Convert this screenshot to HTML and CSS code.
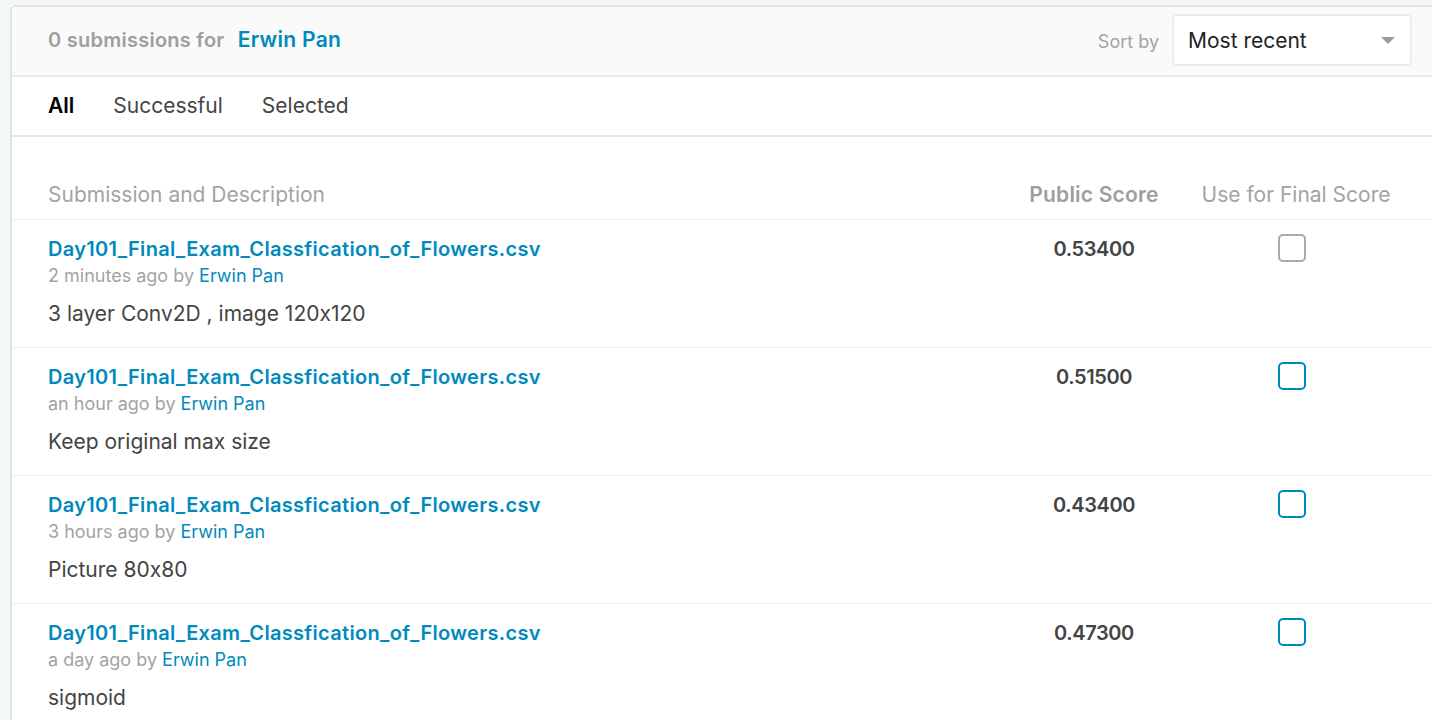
FILE: index.html
```html
<!DOCTYPE html>
<html>
<head>
<meta charset="utf-8">
<link rel="stylesheet" href="styles.css">
</head>
<body>
<div class="card">
  <div class="head">
    <div class="count">0 submissions for <a class="user">Erwin Pan</a></div>
    <div class="sort">
      <span class="sort-label">Sort by</span>
      <div class="select"><span>Most recent</span><span class="caret"></span></div>
    </div>
  </div>
  <div class="tabs">
    <span class="tab active">All</span>
    <span class="tab">Successful</span>
    <span class="tab">Selected</span>
  </div>
  <div class="table">
    <div class="row thead">
      <div class="c-desc">Submission and Description</div>
      <div class="c-score">Public Score</div>
      <div class="c-final">Use for Final Score</div>
    </div>
    <div class="row item">
      <div class="c-desc">
        <a class="file">Day101_Final_Exam_Classfication_of_Flowers.csv</a>
        <div class="meta">2 minutes ago by <a class="by">Erwin Pan</a></div>
        <div class="desc">3 layer Conv2D , image 120x120</div>
      </div>
      <div class="c-score">0.53400</div>
      <div class="c-final"><span class="check off"></span></div>
    </div>
    <div class="row item">
      <div class="c-desc">
        <a class="file">Day101_Final_Exam_Classfication_of_Flowers.csv</a>
        <div class="meta">an hour ago by <a class="by">Erwin Pan</a></div>
        <div class="desc">Keep original max size</div>
      </div>
      <div class="c-score">0.51500</div>
      <div class="c-final"><span class="check"></span></div>
    </div>
    <div class="row item">
      <div class="c-desc">
        <a class="file">Day101_Final_Exam_Classfication_of_Flowers.csv</a>
        <div class="meta">3 hours ago by <a class="by">Erwin Pan</a></div>
        <div class="desc">Picture 80x80</div>
      </div>
      <div class="c-score">0.43400</div>
      <div class="c-final"><span class="check"></span></div>
    </div>
    <div class="row item">
      <div class="c-desc">
        <a class="file">Day101_Final_Exam_Classfication_of_Flowers.csv</a>
        <div class="meta">a day ago by <a class="by">Erwin Pan</a></div>
        <div class="desc">sigmoid</div>
      </div>
      <div class="c-score">0.47300</div>
      <div class="c-final"><span class="check"></span></div>
    </div>
  </div>
</div>
</body>
</html>
```

FILE: styles.css
```css
html, body {
  margin: 0;
  padding: 0;
  background: #f4f7f8;
  overflow: hidden;
  font-family: Inter, Roboto, "Liberation Sans", sans-serif;
  font-feature-settings: "calt" 0;
  color: #3d3d3d;
}
body {
  padding: 5px 0 0 10px;
  width: 1460px;
}
a { text-decoration: none; }
.card {
  width: 1436px;
  background: #fff;
  border: 2px solid #e3e3e3;
  border-radius: 6px;
}
.head {
  height: 68px;
  background: #fafafa;
  border-bottom: 2px solid #ebebeb;
  border-radius: 6px 6px 0 0;
  display: flex;
  align-items: center;
  justify-content: space-between;
  padding: 0 36px;
}
.count {
  font-size: 20px;
  font-weight: 600;
  color: #9e9e9e;
  letter-spacing: 0.25px;
  margin-top: -3px;
}
.count .user {
  color: #008abc;
  margin-left: 8px;
  font-size: 21px;
  letter-spacing: 0.3px;
}
.sort {
  display: flex;
  align-items: center;
  gap: 13px;
}
.sort-label {
  font-size: 18px;
  color: #a3a3a3;
}
.select {
  width: 240px;
  height: 52px;
  box-sizing: border-box;
  border: 2px solid #ececec;
  border-radius: 5px;
  background: #fff;
  display: flex;
  align-items: center;
  justify-content: space-between;
  padding: 0 15px 0 14px;
  font-size: 21px;
  color: #222;
  margin-top: -2px;
}
.caret {
  width: 0;
  height: 0;
  border-left: 7px solid transparent;
  border-right: 7px solid transparent;
  border-top: 7px solid #9b9b9b;
}
.tabs {
  height: 58px;
  border-bottom: 2px solid #e6e6e6;
  display: flex;
  align-items: center;
  gap: 39px;
  padding: 0 36px;
  font-size: 21px;
  color: #444;
}
.tab {
  margin-top: -2px;
}
.tab.active {
  color: #000;
  font-weight: 600;
}
.table {
  padding-top: 33px;
}
.row {
  display: grid;
  grid-template-columns: 1fr 148px 232px;
  column-gap: 12px;
  padding: 0 36px;
  border-bottom: 1px solid #ececec;
}
.thead {
  height: 49px;
  align-items: center;
  font-size: 21px;
  color: #a3a3a3;
}
.thead .c-score {
  font-weight: 600;
  color: #9e9e9e;
  text-align: center;
  font-size: 21px;
  letter-spacing: 0.2px;
}
.thead .c-final {
  text-align: center;
}
.item {
  height: 128px;
  align-items: start;
  padding-top: 15px;
  box-sizing: border-box;
}
.file {
  display: block;
  font-size: 20px;
  font-weight: 600;
  color: #008abc;
  line-height: 28px;
  letter-spacing: 0.32px;
}
.meta {
  font-size: 18px;
  color: #a3a3a3;
  line-height: 26px;
}
.meta .by {
  color: #008abc;
}
.desc {
  margin-top: 12px;
  font-size: 21px;
  color: #444;
  line-height: 26px;
}
.item .c-score {
  text-align: center;
  font-size: 20px;
  font-weight: 600;
  color: #444;
  line-height: 28px;
  letter-spacing: -0.4px;
}
.item .c-final {
  display: flex;
  justify-content: center;
  padding-right: 9px;
}
.check {
  width: 28px;
  height: 28px;
  box-sizing: border-box;
  border: 2px solid #008abc;
  border-radius: 5px;
  background: #fff;
  margin-top: -1px;
}
.check.off {
  border-color: #aaa;
}
```
